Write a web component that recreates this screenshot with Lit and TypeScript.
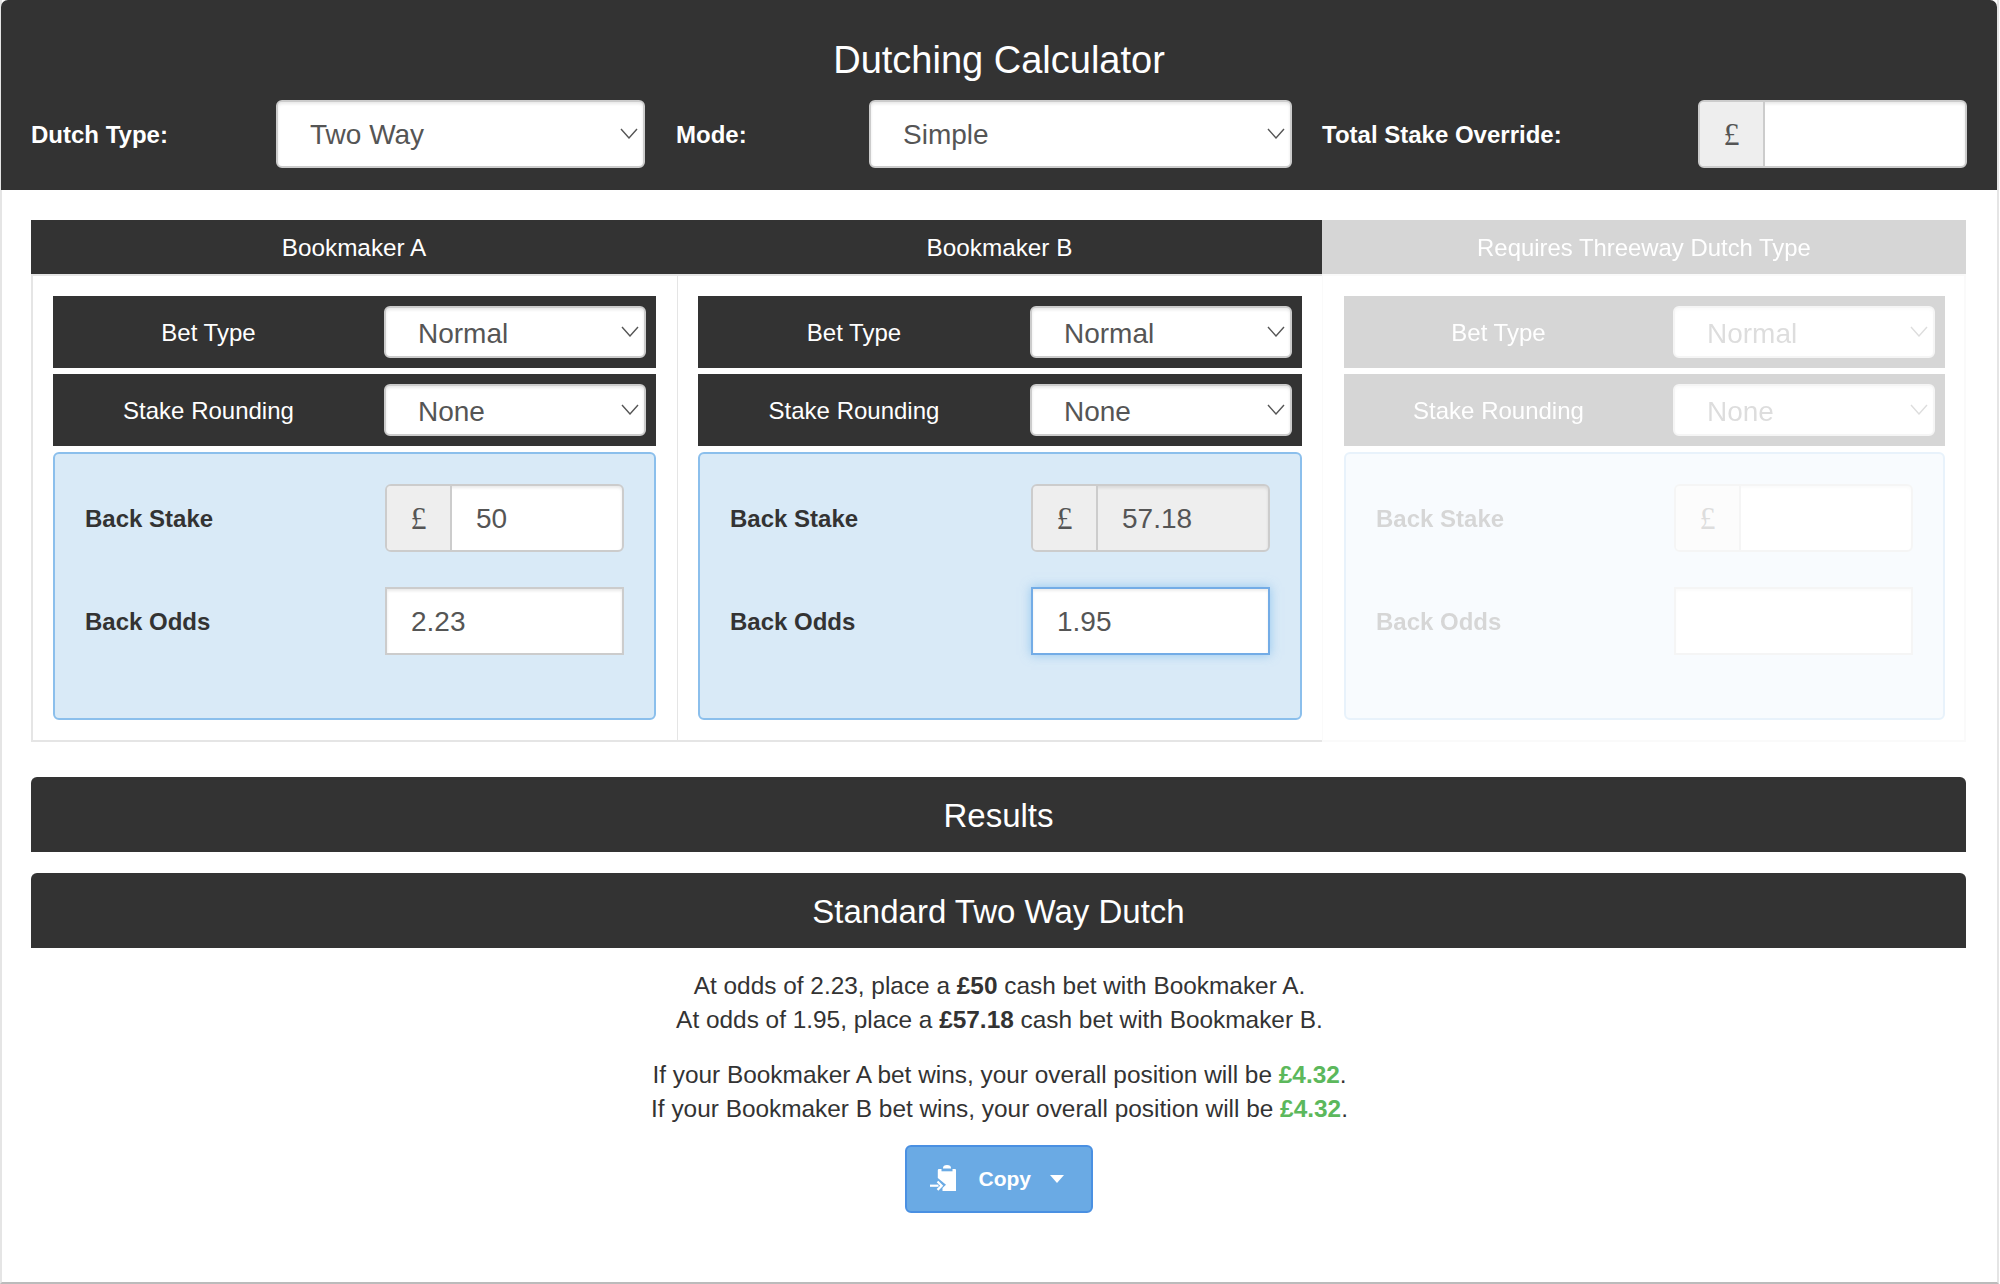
import { LitElement, html, css } from "lit";
import { customElement } from "lit/decorators.js";

const chevron = html`<svg class="chev" viewBox="0 0 18 11" width="18" height="11" aria-hidden="true"><path d="M1 1l8 9 8-9" fill="none" stroke="currentColor" stroke-width="1.4"/></svg>`;

@customElement("app-root")
export class AppRoot extends LitElement {
  static styles = css`
    :host { display: block; width: 2000px; height: 1284px; box-sizing: border-box; font-family: "Liberation Sans", Arial, sans-serif; color: #333; background: #fff; overflow: hidden; }
    * { box-sizing: border-box; }
    .page { height: 1284px; margin-right: 1px; border-left: 2px solid #e5e5e5; border-right: 2px solid #e5e5e5; border-bottom: 2px solid #bbb; }
    .top { background: #333; margin-left: -1px; border-radius: 7px 7px 0 0; height: 190px; padding: 40px 0 0 30px; color: #fff; }
    .top h1 { margin: 0 0 20px; font-size: 38px; line-height: 40px; font-weight: 400; text-align: center; padding-right: 30px; }
    .controls { display: flex; gap: 31px; align-items: center; height: 68px; }
    .field { display: flex; align-items: center; }
    .field b { font-size: 24px; padding-top: 1px; }
    .f1 b { width: 245px; } .f1 .sel { width: 369px; }
    .f2 b { width: 193px; } .f2 .sel { width: 423px; }
    .f3 { margin-left: -1px; }
    .f3 b { width: 376px; } .f3 .group { width: 269px; }
    .sel { position: relative; display: block; color: #555; }
    .sel select { appearance: none; -webkit-appearance: none; width: 100%; height: 68px; padding: 0 32px; border: 2px solid #ccc; border-radius: 6px; background: #fff; color: #555; opacity: 1; font: 28px "Liberation Sans", Arial, sans-serif; box-shadow: inset 0 2px 3px rgba(0,0,0,.09); }
    .sel.small select { height: 52px; padding-top: 2px; }
    .chev { position: absolute; right: 7px; top: 50%; margin-top: -6px; pointer-events: none; }
    .group { display: flex; height: 68px; border: 2px solid #ccc; border-radius: 6px; overflow: hidden; background: #fff; box-shadow: inset 0 2px 3px rgba(0,0,0,.09); }
    .addon { width: 65px; flex: none; display: flex; align-items: center; justify-content: center; background: #eee; border-right: 2px solid #ccc; color: #555; font: 32px "Liberation Serif", serif; }
    .group input { flex: 1; min-width: 0; border: 0; padding: 2px 24px 0; background: transparent; color: #555; font: 28px "Liberation Sans", Arial, sans-serif; outline: 0; }
    .group.ro { background: #eee; }
    .calc { display: grid; grid-template-columns: 646px 645px 644px; padding: 30px 0 0 29px; margin-right: 31px; }
    .col-head { height: 54px; display: flex; align-items: center; justify-content: center; padding-top: 1px; background: #333; color: #fff; font-size: 24.3px; }
    .col.off .col-head { font-size: 23.9px; }
    .col-body { display: flex; flex-direction: column; gap: 6px; height: 468px; padding: 20px 21px 20px 20px; border-left: 1px solid #e5e5e5; border-bottom: 2px solid #e5e5e5; border-top: 2px solid #e5e5e5; }
    .col:first-child .col-body { border-left-width: 2px; }
    .col + .col .col-body { padding-right: 20px; }
    .col.off { opacity: .2; }
    .col.off .col-body { border-right: 2px solid #e5e5e5; padding-left: 21px; padding-right: 19px; }
    .row { display: flex; align-items: center; height: 72px; padding: 0 10px 0 0; background: #333; color: #fff; font-size: 24px; }
    .row span { flex: 1; text-align: center; padding: 1px 20px 0 0; }
    .row .sel { width: 262px; }
    .panel { height: 268px; padding: 30px 30px 0 30px; background: #d9eaf7; border: 2px solid #8bbfec; border-radius: 6px; display: flex; flex-direction: column; gap: 35px; }
    .line { display: flex; align-items: center; justify-content: space-between; font-size: 24px; font-weight: 700; height: 68px; flex: none; }
    .line > span { padding-top: 2px; }
    .line .group, .line .odds { width: 239px; }
    .odds { height: 68px; border: 2px solid #ccc; padding: 2px 24px 0; background: #fff; color: #555; font: 28px "Liberation Sans", Arial, sans-serif; box-shadow: inset 0 2px 3px rgba(0,0,0,.09); outline: 0; }
    .odds.focus { border-color: #73ace6; box-shadow: inset 0 2px 3px rgba(0,0,0,.075), 0 0 10px rgba(102,175,233,.6); }
    .bar { margin: 35px 31px 0 29px; height: 75px; display: flex; align-items: center; justify-content: center; padding-top: 2px; background: #333; color: #fff; font-size: 33px; border-radius: 6px 6px 0 0; }
    .bar + .bar { margin-top: 21px; }
    .result { text-align: center; font-size: 24.4px; line-height: 34px; padding-top: 21px; }
    .result p { margin: 0 0 21px; }
    .gain { color: #5cb85c; }
    .copy { display: inline-flex; align-items: center; width: 188px; height: 68px; margin: -2px 0 0 -2px; padding: 0 0 0 23px; background: #6aaae4; border: 2px solid #4a90e2; border-radius: 6px; color: #fff; font: 700 21px "Liberation Sans", Arial, sans-serif; }
    .copy svg.clip { margin: -2px 22px 0 0; flex: none; }
    .copy .caret { margin-left: 19px; width: 0; height: 0; border-left: 7.5px solid transparent; border-right: 7.5px solid transparent; border-top: 8px solid #fff; }
  `;

  private col(name: string, stake: string, odds: string, opts: { ro?: boolean; focus?: boolean; off?: boolean }) {
    const sel = (v: string) => html`<label class="sel small"><select ?disabled=${opts.off}><option>${v}</option></select>${chevron}</label>`;
    return html`<section class="col ${opts.off ? "off" : ""}">
      <div class="col-head">${name}</div>
      <div class="col-body">
        <div class="row"><span>Bet Type</span>${sel("Normal")}</div>
        <div class="row"><span>Stake Rounding</span>${sel("None")}</div>
        <div class="panel">
          <div class="line"><span>Back Stake</span>
            <div class="group ${opts.ro ? "ro" : ""}"><span class="addon">£</span><input .value=${stake} ?readonly=${opts.ro}></div></div>
          <div class="line"><span>Back Odds</span><input class="odds ${opts.focus ? "focus" : ""}" .value=${odds}></div>
        </div>
      </div>
    </section>`;
  }

  render() {
    return html`<div class="page">
      <header class="top">
        <h1>Dutching Calculator</h1>
        <div class="controls">
          <div class="field f1"><b>Dutch Type:</b><label class="sel"><select><option>Two Way</option></select>${chevron}</label></div>
          <div class="field f2"><b>Mode:</b><label class="sel"><select><option>Simple</option></select>${chevron}</label></div>
          <div class="field f3"><b>Total Stake Override:</b><div class="group"><span class="addon">£</span><input></div></div>
        </div>
      </header>
      <div class="calc">
        ${this.col("Bookmaker A", "50", "2.23", {})}
        ${this.col("Bookmaker B", "57.18", "1.95", { ro: true, focus: true })}
        ${this.col("Requires Threeway Dutch Type", "", "", { off: true })}
      </div>
      <div class="bar">Results</div>
      <div class="bar">Standard Two Way Dutch</div>
      <div class="result">
        <p>At odds of 2.23, place a <b>£50</b> cash bet with Bookmaker A.<br>At odds of 1.95, place a <b>£57.18</b> cash bet with Bookmaker B.</p>
        <p>If your Bookmaker A bet wins, your overall position will be <b class="gain">£4.32</b>.<br>If your Bookmaker B bet wins, your overall position will be <b class="gain">£4.32</b>.</p>
        <button class="copy"><svg class="clip" width="27" height="27" viewBox="0 0 27 27" aria-hidden="true"><path fill="#fff" d="M9 4h16a1 1 0 0 1 1 1v21H12.500v-3L16 19.800 7.800 13V5.200A1.200 1.200 0 0 1 9 4z"/><path fill="#6aaae4" d="M11.500 3h11v3.300h-11z"/><path fill="#fff" d="M13 3.500V3a4 3 0 0 1 8 0v.500z"/><path fill="#fff" d="M0 19.600h8.500v2.200H0z"/><path fill="none" stroke="#fff" stroke-width="2.200" d="M7.500 16.500l4.200 4.200-4.200 4.200"/></svg>Copy<span class="caret"></span></button>
      </div>
    </div>`;
  }
}
